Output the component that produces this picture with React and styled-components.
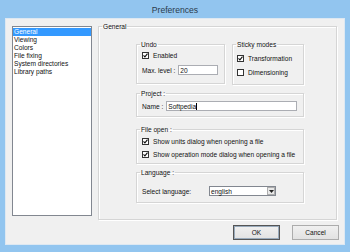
import React from "react"
import styled, { createGlobalStyle } from "styled-components"

const GlobalStyle = createGlobalStyle`
  html, body {
    margin: 0;
    padding: 0;
    width: 350px;
    height: 252px;
    overflow: hidden;
    background: #92c5ef;
  }
  * {
    box-sizing: border-box;
  }
`

const pages = ["General", "Viewing", "Colors", "File fixing", "System directories", "Library paths"]

const Check = ({ checked, children }) => (
  <CheckRow>
    <CheckBox>
      {checked && (
        <svg width="5" height="5" viewBox="0 0 5 5">
          <path d="M0.5 2.4 L1.9 3.9 L4.5 0.6" fill="none" stroke="#111" strokeWidth="1.1" />
        </svg>
      )}
    </CheckBox>
    {children}
  </CheckRow>
)

const App = () => {
  return (
    <Frame>
      <GlobalStyle />
      <TitleBar>Preferences</TitleBar>
      <Client>
        <TopRow>
          <PageList>
            {pages.map((p, i) => (
              <PageItem key={p} selected={i === 0}>{p}</PageItem>
            ))}
          </PageList>
          <MainGroup>
            <Legend>General</Legend>
            <MainBody>
              <GroupRow>
                <Group width="89px">
                  <Legend>Undo</Legend>
                  <Body pad="1.5px 0 8px 5px">
                    <Check checked>Enabled</Check>
                    <FieldRow gap="5.5px">
                      <FieldLabel>Max. level :</FieldLabel>
                      <TextBox width="40px">20</TextBox>
                    </FieldRow>
                  </Body>
                </Group>
                <Group width="72px">
                  <Legend>Sticky modes</Legend>
                  <Body pad="5px 0 7px 4px">
                    <Check checked>Transformation</Check>
                    <Spacer h="5px" />
                    <Check>Dimensioning</Check>
                  </Body>
                </Group>
              </GroupRow>
              <Group top="4px">
                <Legend>Project :</Legend>
                <Body pad="3px 0 5px 5px">
                  <FieldRow>
                    <FieldLabel>Name :</FieldLabel>
                    <TextBox width="131px">Softpedia<Caret /></TextBox>
                  </FieldRow>
                </Body>
              </Group>
              <Group top="8px">
                <Legend>File open :</Legend>
                <Body pad="2.5px 0 4.5px 5px">
                  <Check checked>Show units dialog when opening a file</Check>
                  <Spacer h="4px" />
                  <Check checked>Show operation mode dialog when opening a file</Check>
                </Body>
              </Group>
              <Group top="4px">
                <Legend>Language :</Legend>
                <Body pad="9px 0 6px 5px">
                  <FieldRow>
                    <FieldLabel width="67px">Select language:</FieldLabel>
                    <SelectBox>
                      english
                      <DropButton>
                        <svg width="5" height="3" viewBox="0 0 5 3">
                          <path d="M0 0 H5 L2.5 3 Z" fill="#222" />
                        </svg>
                      </DropButton>
                    </SelectBox>
                  </FieldRow>
                </Body>
              </Group>
            </MainBody>
          </MainGroup>
        </TopRow>
        <ButtonRow>
          <Button primary>OK</Button>
          <Button>Cancel</Button>
        </ButtonRow>
      </Client>
    </Frame>
  )
}

const Frame = styled.div`
  width: 350px;
  height: 252px;
  display: flex;
  flex-direction: column;
  padding: 0 5px 7px 5px;
  font-family: "Liberation Sans", Arial, sans-serif;
  font-size: 6.6px;
  color: #111;
`

const TitleBar = styled.div`
  height: 18px;
  line-height: 20px;
  text-align: center;
  font-size: 8.6px;
  color: #2b3b4c;
`

const Client = styled.div`
  flex: 1;
  background: #f0f0f0;
  border: 1px solid #dde8f2;
  padding: 7px 5px 0 6px;
  display: flex;
  flex-direction: column;
`

const TopRow = styled.div`
  display: flex;
  gap: 6px;
  align-items: flex-start;
`

const PageList = styled.div`
  width: 80px;
  height: 190px;
  background: #fff;
  border: 1px solid #828790;
  padding-top: 0.5px;
`

const PageItem = styled.div`
  height: 8px;
  line-height: 8px;
  padding-left: 1px;
  white-space: nowrap;
  background: ${p => (p.selected ? "#3399ff" : "transparent")};
  color: ${p => (p.selected ? "#fff" : "#111")};
`

const MainGroup = styled.fieldset`
  margin: -4px 0 0 0;
  width: 239px;
  border: 1px solid #d5d5d5;
  box-shadow: inset 1px 1px 0 #fff, 1px 1px 0 #fff;
  padding: 0;
`

const MainBody = styled.div`
  width: 205px;
  padding: 9px 0 16px 37px;
  display: flex;
  flex-direction: column;
`

const Legend = styled.legend`
  padding: 0 1px;
  margin-left: 3px;
  line-height: 9px;
`

const GroupRow = styled.div`
  display: flex;
  gap: 7px;
  align-items: flex-start;
`

const Group = styled.fieldset`
  margin: ${p => p.top || "0"} 0 0 0;
  width: ${p => p.width || "168px"};
  border: 1px solid #d5d5d5;
  box-shadow: inset 1px 1px 0 #fff, 1px 1px 0 #fff;
  padding: 0;
`

const Body = styled.div`
  padding: ${p => p.pad};
  display: flex;
  flex-direction: column;
`

const Spacer = styled.div`
  height: ${p => p.h};
`

const CheckRow = styled.div`
  display: flex;
  align-items: center;
  gap: 4px;
  height: 9px;
  white-space: nowrap;
`

const CheckBox = styled.span`
  width: 7px;
  height: 7px;
  flex: none;
  border: 1px solid #333;
  background: #fff;
  display: flex;
  align-items: center;
  justify-content: center;
`

const FieldRow = styled.div`
  display: flex;
  align-items: center;
  margin-top: ${p => p.gap || "0"};
  white-space: nowrap;
`

const FieldLabel = styled.span`
  width: ${p => p.width || "auto"};
  margin-right: 3px;
`

const TextBox = styled.div`
  width: ${p => p.width};
  height: 10px;
  background: #fff;
  border: 1px solid #abadb3;
  padding-left: 1px;
  display: flex;
  align-items: center;
`

const Caret = styled.span`
  width: 1px;
  height: 7px;
  background: #000;
`

const SelectBox = styled.div`
  width: 67px;
  height: 10px;
  margin-left: -3px;
  background: #fff;
  border: 1px solid #828790;
  padding-left: 1px;
  display: flex;
  align-items: center;
  justify-content: space-between;
`

const DropButton = styled.span`
  width: 8px;
  height: 8px;
  background: #e8e8e8;
  border: 1px solid #adadad;
  display: flex;
  align-items: center;
  justify-content: center;
`

const ButtonRow = styled.div`
  display: flex;
  justify-content: flex-end;
  gap: 12px;
  margin-top: 5px;
`

const Button = styled.button`
  width: 47px;
  height: 15px;
  padding: 0;
  font: inherit;
  color: #111;
  background: linear-gradient(#f0f0f0, #e2e2e2);
  border: 1px solid ${p => (p.primary ? "#555" : "#acacac")};
  box-shadow: ${p => (p.primary ? "inset 0 0 0 1px #9ab" : "none")};
`

export default App
